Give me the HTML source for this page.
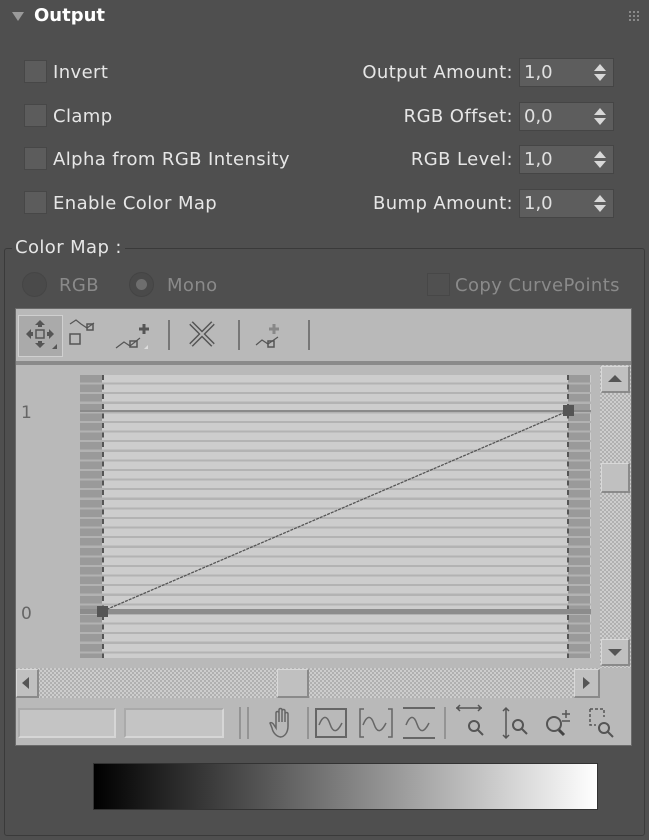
<!DOCTYPE html>
<html><head><style>
*{margin:0;padding:0;box-sizing:border-box}
body{width:649px;height:840px;background:#4f4f4f;font-family:"DejaVu Sans","Liberation Sans",sans-serif;color:#e6e6e6;position:relative;overflow:hidden}
.a{position:absolute}
.t{position:absolute;font-size:18px;white-space:nowrap;line-height:20px;letter-spacing:0.4px}
.cb{position:absolute;width:23px;height:23px;background:#5c5c5c;border:1px solid #474747}
.sp{position:absolute;left:519px;width:95px;height:29px;background:#5d5d5d;border:1px solid #454545;font-size:18px;line-height:27px;padding-left:4px;color:#e0e0e0}
.sp:after{content:"";position:absolute;right:7px;top:5px;border:6px solid transparent;border-bottom:7px solid #d8d8d8;border-top:0}
.sp:before{content:"";position:absolute;right:7px;top:15px;border:6px solid transparent;border-top:7px solid #d8d8d8;border-bottom:0}
.r{text-align:right;right:136px}
.dim{color:#8a8a8a}
.chk{background:repeating-conic-gradient(#cdcdcd 0 25%,#b0b0b0 0 50%) 0 0/4px 4px}
</style></head><body>
<div class="a" style="left:12px;top:12px;border:6px solid transparent;border-top:9px solid #9a9a9a;border-bottom:0"></div>
<div class="t" style="left:34px;top:6px;font-weight:bold;color:#fff;letter-spacing:0">Output</div>
<svg class="a" style="left:629px;top:11px" width="12" height="10"><g fill="#8a8a8a"><rect x="0" y="0" width="2" height="2"/><rect x="4" y="0" width="2" height="2"/><rect x="8" y="0" width="2" height="2"/><rect x="0" y="4" width="2" height="2"/><rect x="4" y="4" width="2" height="2"/><rect x="8" y="4" width="2" height="2"/><rect x="0" y="8" width="2" height="2"/><rect x="4" y="8" width="2" height="2"/><rect x="8" y="8" width="2" height="2"/></g></svg>

<div class="cb" style="left:24px;top:60px"></div><div class="t" style="left:53px;top:63px">Invert</div>
<div class="cb" style="left:24px;top:104px"></div><div class="t" style="left:53px;top:107px">Clamp</div>
<div class="cb" style="left:24px;top:147px"></div><div class="t" style="left:53px;top:150px">Alpha from RGB Intensity</div>
<div class="cb" style="left:24px;top:191px"></div><div class="t" style="left:53px;top:194px">Enable Color Map</div>

<div class="t r" style="top:63px">Output Amount:</div><div class="sp" style="top:58px">1,0</div>
<div class="t r" style="top:107px">RGB Offset:</div><div class="sp" style="top:102px">0,0</div>
<div class="t r" style="top:150px">RGB Level:</div><div class="sp" style="top:145px">1,0</div>
<div class="t r" style="top:194px">Bump Amount:</div><div class="sp" style="top:189px">1,0</div>

<div class="a" style="left:4px;top:248px;width:641px;height:588px;border:1px solid #3a3a3a;border-radius:3px"></div>
<div class="t" style="left:12px;top:238px;background:#4f4f4f;padding:0 3px">Color Map :</div>

<div class="a" style="left:22px;top:272px;width:25px;height:25px;border-radius:50%;background:#4a4a4a;border:1px solid #454545"></div>
<div class="t dim" style="left:59px;top:276px">RGB</div>
<div class="a" style="left:129px;top:272px;width:25px;height:25px;border-radius:50%;background:#4a4a4a;border:1px solid #444"><div class="a" style="left:6px;top:6px;width:11px;height:11px;border-radius:50%;background:#6e6e6e"></div></div>
<div class="t dim" style="left:167px;top:276px">Mono</div>
<div class="a" style="left:427px;top:273px;width:23px;height:23px;background:#505050;border:1px solid #474747"></div>
<div class="t dim" style="left:455px;top:276px">Copy CurvePoints</div>

<!-- curve panel -->
<div class="a" style="left:15px;top:308px;width:617px;height:438px;background:#b9b9b9;border:1px solid #6a6a6a"></div>
<div class="a" style="left:16px;top:361px;width:615px;height:4px;background:#8a8a8a"></div>
<div class="a" style="left:18px;top:315px;width:45px;height:42px;background:#aaa;border:1px solid #d0d0d0"></div>
<svg class="a" style="left:16px;top:310px" width="310" height="50" fill="none" stroke="#555" stroke-width="2">
<g fill="#555" stroke="none"><path d="M24 10l-5 5h10z M24 38l-5-5h10z M10 24l5-5v10z M38 24l-5-5v10z"/><rect x="22" y="13" width="4" height="4"/><rect x="22" y="31" width="4" height="4"/><rect x="13" y="22" width="4" height="4"/><rect x="31" y="22" width="4" height="4"/><path d="M36 39l5-5v5z"/></g>
<rect x="20" y="20" width="8" height="8" stroke-width="1.5"/>
<path d="M54 14l6-4 5 4 6 4 7-5" stroke-width="1.2"/><rect x="71" y="14" width="6" height="6" stroke-width="1.5"/><rect x="54" y="24" width="10" height="10" stroke-width="1.5"/>
<path d="M100 38l8-6 6 4 10-8" stroke-width="1.2"/><rect x="114" y="31" width="7" height="6" stroke-width="1.5"/><path d="M128 14v10M123 19h10" stroke-width="3"/><path d="M128 39l4-4v4z" fill="#ddd" stroke="none"/>
<line x1="153" y1="10" x2="153" y2="40" stroke="#777"/>
<path d="M175 13l22 22M197 13l-22 22" stroke-width="5"/><path d="M175 13l22 22M197 13l-22 22" stroke="#b9b9b9" stroke-width="2"/>
<line x1="223" y1="10" x2="223" y2="40" stroke="#777"/>
<path d="M240 35l6-5 6 4 10-7" stroke-width="1.2"/><rect x="252" y="31" width="6" height="6" stroke-width="1.5"/><path d="M258 14v10M253 19h10" stroke="#888" stroke-width="3"/>
<line x1="293" y1="10" x2="293" y2="40" stroke="#777"/>
</svg>

<!-- graph -->
<div class="a" style="left:80px;top:375px;width:511px;height:283px;background:repeating-linear-gradient(180deg,#cdcdcd 0,#cdcdcd 7.5px,#b3b3b3 7.5px,#b3b3b3 9.6px)"></div>
<div class="a" style="left:80px;top:375px;width:22px;height:283px;background:repeating-linear-gradient(180deg,#9a9a9a 0,#9a9a9a 7.5px,#b2b2b2 7.5px,#b2b2b2 9.6px)"></div>
<div class="a" style="left:568px;top:375px;width:22px;height:283px;background:repeating-linear-gradient(180deg,#9a9a9a 0,#9a9a9a 7.5px,#b2b2b2 7.5px,#b2b2b2 9.6px)"></div>
<div class="a" style="left:102px;top:375px;width:2px;height:283px;background:repeating-linear-gradient(180deg,#555 0,#555 5px,transparent 5px,transparent 9.6px)"></div>
<div class="a" style="left:567px;top:375px;width:2px;height:283px;background:repeating-linear-gradient(180deg,#555 0,#555 5px,transparent 5px,transparent 9.6px)"></div>
<div class="a" style="left:80px;top:410px;width:511px;height:2px;background:#8a8a8a"></div>
<div class="a" style="left:80px;top:609px;width:511px;height:5px;background:#8c8c8c"></div>
<svg class="a" style="left:0;top:0" width="649" height="700"><line x1="103" y1="611" x2="568" y2="411" stroke="#555" stroke-width="1.3" stroke-dasharray="3 1"/><rect x="97" y="606" width="11" height="11" fill="#555"/><rect x="563" y="405" width="11" height="11" fill="#555"/></svg>
<div class="t" style="left:21px;top:403px;color:#666;font-size:17px">1</div>
<div class="t" style="left:21px;top:604px;color:#666;font-size:17px">0</div>
<!-- v scroll -->
<div class="a chk" style="left:600px;top:365px;width:31px;height:303px"></div>
<div class="a" style="left:601px;top:366px;width:29px;height:27px;background:#c0c0c0;border:1px solid #d8d8d8;border-right:2px solid #8a8a8a;border-bottom:2px solid #8a8a8a"><div class="a" style="left:6px;top:8px;border:7px solid transparent;border-bottom:7px solid #555;border-top:0"></div></div>
<div class="a" style="left:601px;top:463px;width:29px;height:30px;background:#c0c0c0;border:1px solid #d8d8d8;border-right:2px solid #8a8a8a;border-bottom:2px solid #8a8a8a"></div>
<div class="a" style="left:601px;top:639px;width:29px;height:27px;background:#c0c0c0;border:1px solid #d8d8d8;border-right:2px solid #8a8a8a;border-bottom:2px solid #8a8a8a"><div class="a" style="left:6px;top:9px;border:7px solid transparent;border-top:7px solid #555;border-bottom:0"></div></div>
<!-- h scroll -->
<div class="a chk" style="left:16px;top:668px;width:584px;height:30px"></div>
<div class="a" style="left:16px;top:669px;width:23px;height:29px;background:#c0c0c0;border:1px solid #d8d8d8;border-right:2px solid #8a8a8a;border-bottom:2px solid #8a8a8a"><div class="a" style="left:5px;top:7px;border:6px solid transparent;border-right:7px solid #555;border-left:0"></div></div>
<div class="a" style="left:277px;top:669px;width:32px;height:29px;background:#c0c0c0;border:1px solid #d8d8d8;border-right:2px solid #8a8a8a;border-bottom:2px solid #8a8a8a"></div>
<div class="a" style="left:574px;top:669px;width:26px;height:29px;background:#c0c0c0;border:1px solid #d8d8d8;border-right:2px solid #8a8a8a;border-bottom:2px solid #8a8a8a"><div class="a" style="left:8px;top:7px;border:6px solid transparent;border-left:7px solid #555;border-right:0"></div></div>
<!-- bottom toolbar -->
<div class="a" style="left:18px;top:708px;width:98px;height:30px;background:#c4c4c4;border:2px solid #aaa;border-right-color:#d6d6d6;border-bottom-color:#d6d6d6"></div>
<div class="a" style="left:124px;top:708px;width:100px;height:30px;background:#c4c4c4;border:2px solid #aaa;border-right-color:#d6d6d6;border-bottom-color:#d6d6d6"></div>
<svg class="a" style="left:230px;top:704px" width="410" height="40" fill="none" stroke="#666" stroke-width="1.5">
<path d="M10 3v32M18 3v32M78 3v32M215 3v32" stroke="#888"/>
<g transform="translate(17,0)"><path d="M34 33c-4 0-8-4-9-9l-2-5c1-1 3 0 4 2l2 3V9c0-2 3-2 3 0v9V6c0-2 3-2 3 0v12V7c0-2 3-2 3 0v11V10c0-2 3-2 3 0v12c0 6-3 11-8 11z"/></g>
<rect x="86" y="5" width="30" height="28" stroke-width="2"/><path d="M89 21c4-10 8-10 11-1s7 9 12-1"/>
<path d="M134 5h-4v28h4M158 5h4v28h-4M133 21c4-10 8-10 11-1s7 9 12-1"/>
<path d="M173 4h32M173 34h32" stroke-width="2"/><path d="M176 21c4-10 8-10 11-1s7 9 12-1"/>
<g stroke="#555"><path d="M226 4h26M227 4l3-3M227 4l3 3M251 4l-3-3M251 4l-3 3"/><circle cx="244" cy="22" r="5" stroke-width="2"/><path d="M248 26l5 5" stroke-width="2"/>
<path d="M276 4v30M273 7l3-3 3 3M273 31l3 3 3-3"/><circle cx="288" cy="21" r="5" stroke-width="2"/><path d="M292 25l5 5" stroke-width="2"/>
<circle cx="324" cy="20" r="7" stroke-width="2"/><path d="M329 26l5 5" stroke="#444" stroke-width="3"/><path d="M336 6v8M332 10h8M332 17h8"/>
<path d="M360 5h14v8M360 5v16h6" stroke-dasharray="3 2"/><circle cx="374" cy="24" r="5" stroke-width="2"/><path d="M378 28l5 5" stroke-width="2"/></g>
</svg>
<!-- gradient -->
<div class="a" style="left:93px;top:763px;width:505px;height:47px;background:linear-gradient(90deg,#000,#fff);border:1px solid #333"></div>
</body></html>
